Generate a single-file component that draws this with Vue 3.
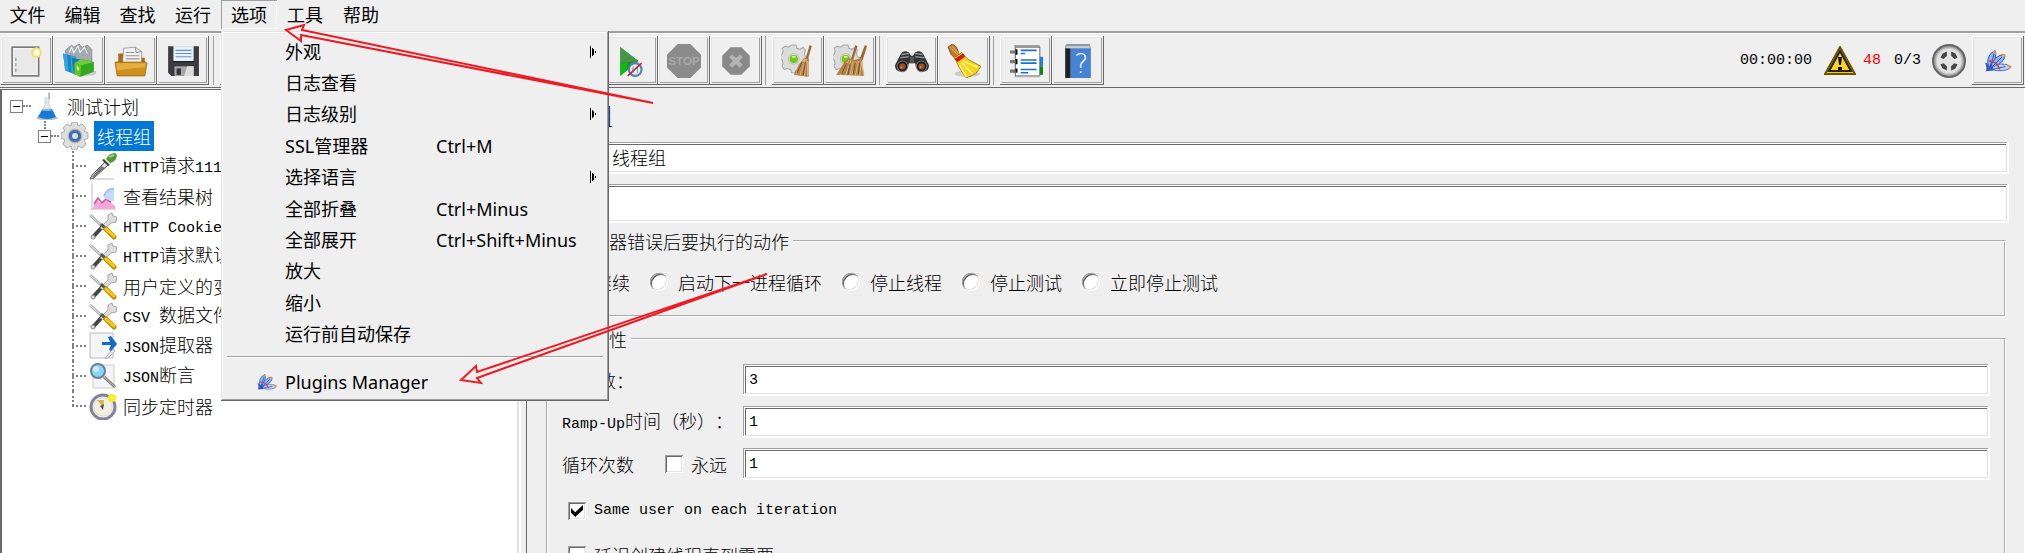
<template>
  <div class="window">
    <nav class="menubar">
      <button v-for="name in menus" :key="name" class="menu-title" :class="{ open: name === openMenu }" @click="openMenu = name">{{ name }}</button>
    </nav>

    <div class="toolbar">
      <div v-for="(group, index) in toolGroups" :key="index" class="tool-group">
        <button v-for="tool in group" :key="tool" class="tool" :aria-label="tool">
          <svg class="tool-icon" viewBox="0 0 32 32" v-html="icons[tool]"></svg>
        </button>
      </div>
      <div class="status">
        <span class="latin">00:00:00</span>
        <svg class="warning" viewBox="0 0 32 30">
          <path d="M16 1 31 28H1z" fill="#fc0" stroke="#6b5500" stroke-width="2" />
          <path d="M16 5 27 25H5z" fill="#ffd21a" stroke="#222" stroke-width="2" />
          <path d="M14 11h4l-1 8h-2zM14 21h4v3h-4z" fill="#111" />
        </svg>
        <span class="latin errors">48</span>
        <span class="latin threads">0/3</span>
        <svg class="tool-icon" viewBox="0 0 32 32" v-html="icons.state"></svg>
      </div>
      <button class="tool" aria-label="plugins">
        <svg class="tool-icon small" viewBox="0 0 32 32" v-html="icons.plugins"></svg>
      </button>
    </div>

    <div class="body">
      <ul class="tree">
        <li v-for="(node, index) in nodes" :key="index" class="node" :class="['level-' + node.level, { selected: node.selected }]">
          <button v-if="node.level < 2" class="expander" aria-label="collapse"></button>
          <svg class="node-icon" viewBox="0 0 28 28" v-html="icons[node.icon]"></svg>
          <span class="node-label"><span v-for="(run, i) in runs(node.text)" :key="i" :class="{ latin: run.latin }">{{ run.text }}</span></span>
        </li>
      </ul>

      <main class="panel">
        <h1 class="title">线程组</h1>
        <div class="row">
          <label for="name">名称：</label>
          <input id="name" v-model="name" class="field" type="text">
        </div>
        <div class="row">
          <label for="comment">注释：</label>
          <input id="comment" v-model="comment" class="field tall" type="text">
        </div>

        <fieldset class="box">
          <legend>在取样器错误后要执行的动作</legend>
          <div class="radios">
            <label v-for="action in actions" :key="action" class="choice">
              <input v-model="onError" class="radio" type="radio" name="action" :value="action">{{ action }}
            </label>
          </div>
        </fieldset>

        <fieldset class="box props">
          <legend>线程属性</legend>
          <div class="grid">
            <label for="threads">线程数：</label>
            <input id="threads" v-model="threads" class="field latin" type="text">
            <label for="ramp"><span class="latin">Ramp-Up</span>时间（秒）：</label>
            <input id="ramp" v-model="ramp" class="field latin" type="text">
            <div class="loops">
              <label for="loops">循环次数</label>
              <label class="choice"><input v-model="forever" class="check" type="checkbox">永远</label>
            </div>
            <input id="loops" v-model="loops" class="field latin" type="text">
          </div>
          <div class="options">
            <label class="choice"><input v-model="sameUser" class="check" type="checkbox"><span class="latin">Same user on each iteration</span></label>
            <label class="choice"><input v-model="delayed" class="check" type="checkbox">延迟创建线程直到需要</label>
          </div>
        </fieldset>
      </main>
    </div>

    <div v-if="openMenu === '选项'" class="popup">
      <ul class="popup-list">
        <li v-for="item in options" :key="item.text">
          <button class="item">
            <span class="item-text">{{ item.text }}</span>
            <span class="shortcut">{{ item.keys }}</span>
            <svg v-if="item.sub" class="sub" viewBox="0 0 6 12"><path d="M0 0h1v12H0zM2 2h1v8H2zM3 3h1v6H3zM5 5h1v2H5z" /></svg>
          </button>
        </li>
      </ul>
      <hr class="line">
      <button class="item plugins">
        <svg class="item-icon" viewBox="0 0 32 32" v-html="icons.plugins"></svg>
        <span class="item-text">Plugins Manager</span>
      </button>
    </div>

    <svg class="arrows" width="800" height="400" aria-hidden="true">
      <path d="M653 103 302 30 304 25 286 30 301 41V35z" />
      <path d="M767 274 477 372 476 366 461 380 481 383 477 378z" />
    </svg>
  </div>
</template>

<script setup>
import { ref } from 'vue';

const openMenu = ref('选项');
const name = ref('线程组');
const comment = ref('');
const onError = ref('');
const threads = ref('3');
const ramp = ref('1');
const loops = ref('1');
const forever = ref(false);
const sameUser = ref(true);
const delayed = ref(false);

const menus = ['文件', '编辑', '查找', '运行', '选项', '工具', '帮助'];
const actions = ['继续', '启动下一进程循环', '停止线程', '停止测试', '立即停止测试'];

const toolGroups = [
  ['new', 'templates', 'open', 'save'],
  ['cut', 'copy', 'paste'],
  ['expand', 'collapse', 'toggle'],
  ['start', 'startNoPause', 'stop', 'shutdown'],
  ['clear', 'clearAll'],
  ['search', 'searchReset'],
  ['functions', 'help']
];

const options = [
  { text: '外观', sub: true },
  { text: '日志查看' },
  { text: '日志级别', sub: true },
  { text: 'SSL管理器', keys: 'Ctrl+M' },
  { text: '选择语言', sub: true },
  { text: '全部折叠', keys: 'Ctrl+Minus' },
  { text: '全部展开', keys: 'Ctrl+Shift+Minus' },
  { text: '放大' },
  { text: '缩小' },
  { text: '运行前自动保存' }
];

const nodes = [
  { text: '测试计划', level: 0, icon: 'flask' },
  { text: '线程组', level: 1, icon: 'gear', selected: true },
  { text: 'HTTP请求111', level: 2, icon: 'dropper' },
  { text: '查看结果树', level: 2, icon: 'chart' },
  { text: 'HTTP Cookie管理器', level: 2, icon: 'config' },
  { text: 'HTTP请求默认值', level: 2, icon: 'config' },
  { text: '用户定义的变量', level: 2, icon: 'config' },
  { text: 'CSV 数据文件设置', level: 2, icon: 'config' },
  { text: 'JSON提取器', level: 2, icon: 'extract' },
  { text: 'JSON断言', level: 2, icon: 'lens' },
  { text: '同步定时器', level: 2, icon: 'clock' }
];

// Separa el texto en tramos latinos y chinos, cada uno con su fuente
function runs(text) {
  return text.match(/[\x20-\x7e]+|[^\x20-\x7e]+/g).map(part => ({ text: part, latin: part.charCodeAt(0) < 127 }));
}

const cog = '<path d="M10 1h4l1 3 3 1 3-2 2 3-1 3 1 3 3 1v3l-3 1-1 3 1 3-3 2-3-1-3 1-1 2h-3l-1-3-3-1-3 1-2-3 1-3-1-3-2-1v-3l2-1 1-3-1-3 3-2 3 1z" fill="#dcdcdc" stroke="#aaa"/><circle cx="12" cy="14" r="5" fill="#eee" stroke="#bbb"/><circle cx="12" cy="14" r="4" fill="#76c51b"/><ellipse cx="12" cy="12" rx="2" ry="1" fill="#d5f7a0"/>';

const icons = {
  new: '<rect x="2" y="3" width="25" height="27" fill="#f4f4f4" stroke="#777" stroke-width="1.5"/><rect x="4" y="5" width="21" height="23" fill="#e9e9ea"/><path d="M5 13h1v3H5zM5 18h1v3H5zM5 23h1v3H5z" fill="#888"/><circle cx="25" cy="8" r="5" fill="#f3e06c"/><circle cx="25" cy="8" r="3" fill="#fffce0"/>',
  templates: '<ellipse cx="22" cy="27" rx="11" ry="3" fill="#ccc"/><path d="M3 6 9 1l2 2 5-3 3 3 5-2 4 4v12H5z" fill="#a3abad" stroke="#778" stroke-width=".6"/><path d="m7 8 2-5 2 5 4-6 2 6 4-5 3 6" fill="none" stroke="#f4f6f6"/><path d="m1 9 12 3v17L3 25z" fill="#1386c4"/><path d="m1 9 4 1 1 16-3-1zM8 11l5 1v17l-4-2z" fill="#36a3de"/><path d="m9 13 11 2v14l-9-2z" fill="#117aba"/><path d="m11 18 7-4 12 3v9l-13 5-5-3z" fill="#36a81d"/><path d="m12 18 6 2-1 11-5-3z" fill="#68c822"/><path d="m18 20 12-3-12-3-6 4z" fill="#71ca39"/><path d="m14 21 2 1v3l-2-1z" fill="#e7ffd3"/>',
  open: '<path d="M4 9h8l2 4h15v9H4z" fill="#a76b11"/><path d="m9 4 11-1 6 4v12H8z" fill="#f1f1f1" stroke="#888" stroke-width=".7"/><path d="m20 3 1 5 5-1M11 8h8m-8 3h13m-13 3h13" fill="none" stroke="#999"/><path d="M1 17h29l1 1-2 12H3z" fill="#d18f20" stroke="#956006" stroke-width=".7"/><path d="M2 18h28l-1 4q-13 0-26 3z" fill="#e4ae40"/>',
  save: '<path d="M2 2h29v28H5l-3-3z" fill="#3c3c40"/><path d="M7 2h19v14H7z" fill="#e9f1fb"/><path d="M9 6h15M9 9h15M9 12h15" stroke="#6596cb"/><path d="M6 16h21v1H6z" fill="#1b1b1d"/><rect x="8" y="21" width="18" height="9" fill="#a6a7aa"/><path d="M10 23h4v6h-4z" fill="#303134"/><path d="M20 21h6v9h-9z" fill="#ddd"/>',
  cut: '<path d="m10 4 12 20M22 4 10 24" stroke="#666" stroke-width="2"/>',
  copy: '<path d="M6 4h14v18H6zM12 10h14v18H12z" fill="#fff" stroke="#777"/>',
  paste: '<path d="M6 4h20v24H6z" fill="#c99f5c" stroke="#777"/>',
  expand: '<path d="M14 6h4v8h8v4h-8v8h-4v-8H6v-4h8z" fill="#555"/>',
  collapse: '<path d="M6 14h20v4H6z" fill="#555"/>',
  toggle: '<path d="m4 16 8-8v5h8V8l8 8-8 8v-5h-8v5z" fill="#555"/>',
  start: '<path d="M7 3 27 16 7 29z" fill="#159a20"/>',
  startNoPause: '<path d="M5 3 22 16 5 30z" fill="#19911d"/><path d="m5 3 17 13-17 2z" fill="#46964a"/><path d="M5 18h7l-2 8-5 3z" fill="#0abf0a"/><circle cx="19" cy="24" r="6" fill="#e9f2fa" stroke="#4f82b0" stroke-width="2"/><path d="M17 21v6m4-6v6" stroke="#649bca"/><path d="m12 30 13-12" stroke="#d52222" stroke-width="1.5"/>',
  stop: '<path d="M10 0h12l10 10v12L22 32H10L0 22V10z" fill="#8b8b8b"/><text x="16" y="20" text-anchor="middle" font-family="Liberation Sans" font-weight="bold" font-size="11" fill="#a9a9a9">STOP</text>',
  shutdown: '<path d="M11 3h10l8 8v10l-8 8H11l-8-8V11z" fill="#898989"/><path d="m11 11 10 10M21 11 11 21" stroke="#b4b4b4" stroke-width="4"/>',
  clear: cog + '<path d="m27 1 2 1-4 13-2-1z" fill="#9a6a34"/><path d="m22 13 4 1v17l-14-2 5-10z" fill="#b68145"/><path d="m22 14-8 14m9-14-5 15m6-15-2 16m3-14v14" stroke="#d9b37d"/><path d="m20 17-5 10m8-10-2 12" stroke="#7c4e22"/>',
  clearAll: cog + '<path d="m21 1 2 1-4 13-2-1zM30 1l2 1-4 13-3-1z" fill="#9a6a34"/><path d="m15 13 5 2 7-2 2 17-26-1 7-11z" fill="#b68145"/><path d="M15 15 7 29m10-14-5 14m7-13-3 13m6-12-5 13m7-14-3 14m6-14-2 14m2-13 2 12" stroke="#dbb681"/><path d="m13 18-5 10m8-9-2 10m7-11-2 10m6-10-1 10" stroke="#7c4e22"/>',
  search: '<path d="M5 10q3-5 8-2l2 3h2l2-3q5-3 8 2l5 10q0 6-6 6-6 0-7-8h-6q-1 8-7 8-6 0-6-6z" fill="#303135"/><path d="m6 10 7-1M19 9l7 1M5 13l8-1M19 12l9 1" stroke="#8a8c90" stroke-width="1.5"/><path d="M14 12h4v6h-4z" fill="#555"/><circle cx="7" cy="21" r="5" fill="#151515" stroke="#777"/><circle cx="25" cy="21" r="5" fill="#151515" stroke="#777"/><circle cx="7" cy="21" r="3" fill="#97501a"/><circle cx="25" cy="21" r="3" fill="#97501a"/><circle cx="6" cy="22" r="1" fill="#d98e45"/><circle cx="24" cy="22" r="1" fill="#d98e45"/>',
  searchReset: '<ellipse cx="19" cy="28" rx="12" ry="3" fill="#ccc"/><path d="m1 3 4-3 4 3 3 8-5 2-3-3z" fill="#bd792a" stroke="#774714" stroke-width=".8"/><path d="m3 3 7 7M5 2l6 7" stroke="#e0a455"/><path d="m7 13 7-5 5 6 13 7-5 7-9 4-6-9z" fill="#f2d51c" stroke="#9a7e05" stroke-width=".8"/><path d="m15 16 14 6m-15-4 10 10m-12-8 6 11" stroke="#fff17b" stroke-width="1.5"/><path d="m7 14 8-5 2 3-7 5z" fill="#d31621"/>',
  functions: '<rect x="5" y="3" width="24" height="29" fill="#ddd"/><rect x="6" y="3" width="23" height="27" fill="#fff" stroke="#777"/><rect x="5" y="1" width="24" height="2" fill="#999"/><path d="M6 5h2v5H6zM6 14h2v5H6zM6 23h2v4H6z" fill="#111"/><path d="M1 6h5v3H1zM1 15h5v3H1zM1 24h5v3H1z" fill="#777"/><path d="M11 6h15M11 9h4M11 15h15M11 18h15M11 24h15M11 27h7" stroke="#1672d4" stroke-width="1.5"/><path d="M29 12h3v9h-3z" fill="#1d7de5"/><path d="M29 21h3v8h-3z" fill="#078912"/>',
  help: '<path d="M4 2q0-2 2-2h21l1 4v27H4z" fill="#8a98aa"/><path d="M4 4h5v28H4z" fill="#222"/><path d="M9 4h19v28H9z" fill="#4683d4"/><path d="M5 2h22v2H5z" fill="#ccc"/><text x="19" y="27" text-anchor="middle" font-family="DejaVu Sans" font-size="25" fill="#f1f7ff">?</text>',
  state: '<circle cx="16" cy="16" r="15" fill="#aaa" stroke="#666" stroke-width="2"/><circle cx="16" cy="16" r="12" fill="#e3e3e3" stroke="#ccc"/><path d="m8 13 2-4 4-2v4l-3 3zM18 7l4 2 2 4-3 1-3-3zM8 19l3-1 3 3v4l-4-2zM21 18l3 1-2 4-4 2v-4z" fill="#444"/>',
  plugins: '<path d="M6 25Q2 9 13 5q3 6-6 20" fill="#8cb5ec" stroke="#3155b5"/><path d="M7 25Q12 9 23 9q2 8-16 16" fill="#8fb6eb" stroke="#3155b5"/><path d="M7 25q12-10 23-3-5 7-23 3" fill="#c1d4f3" stroke="#4267bd"/><path d="M7 24 12 8M8 24l12-12M9 25l15-3M5 26l-2-8 4 6 2-5 1 6" fill="none" stroke="#244bbb"/><path d="M11 7q3-2 2 2M20 10q4-2 3 2M26 21q4 0 2 3" fill="none" stroke="#e59a48" stroke-width="2"/><path d="M6 16q9 0 12 9" fill="none" stroke="#d13b54" stroke-width="1.5"/><path d="m5 19 6 7-8 1z" fill="#315bc0"/>',
  flask: '<ellipse cx="14" cy="26" rx="11" ry="2" fill="#bbb"/><path d="M12 6h4v7l6 12q-8 3-17 0l7-12z" fill="#e3eaee" stroke="#b9c4c9" stroke-width=".7"/><path d="m15 1 2-1v7h-2z" fill="#bbb"/><path d="m9 18 10-1 4 8q-9 4-18 0z" fill="#1679da"/><ellipse cx="14" cy="18" rx="5" ry="1" fill="#76b5ed"/>',
  gear: '<path d="M11 0h5l1 4 4-2 4 4-2 3 4 2v5l-4 2 2 4-4 4-4-2-1 4h-5l-1-4-4 2-4-4 2-4-4-2v-5l4-2-2-3 4-4 4 2z" fill="#dedfe0" stroke="#999" stroke-width=".8"/><circle cx="14" cy="14" r="7" fill="#8f9da9" stroke="#bbb"/><circle cx="14" cy="14" r="6" fill="#476da6"/><circle cx="14" cy="14" r="3" fill="#c8e3fb"/>',
  dropper: '<path d="M3 27h22" stroke="#ddd" stroke-width="2"/><path d="m16 10 3 3L5 26l-4 1 2-4z" fill="#dfe2e1" stroke="#555"/><path d="m12 14 4 2L5 26l-2-1z" fill="#777"/><path d="m15 7 6 6-2 1-6-6z" fill="#444"/><path d="M17 7q3-6 9-6 3 1 1 6-2 3-6 4z" fill="#4e9836"/><path d="m20 5 5-2" stroke="#9fce85" stroke-width="2"/>',
  chart: '<path d="M3 1v27h24" fill="none" stroke="#bbb"/><path d="M4 26q3-10 5-8l3 3q4-5 8-2l6 5v3H4z" fill="#f5a6dc"/><path d="m5 22 4-6 4 5 4-4 5 3" fill="none" stroke="#d0518a" stroke-width="1.5"/><path d="M14 14q3-9 11-8v13q-8 0-11-5z" fill="#c1dafb"/><path d="M15 14q3-8 10-7" fill="none" stroke="#82aae9"/>',
  config: '<path d="m1 3 12 11" stroke="#aaa" stroke-width="3"/><path d="m1 3 12 11" stroke="#eee"/><path d="M14 14 4 25" stroke="#454545" stroke-width="4"/><circle cx="4" cy="25" r="2" fill="#ddd" stroke="#888"/><path d="m11 16 8-8V3l4-2 1 3 4 1-1 5-5 1-8 7z" fill="#ddd" stroke="#888" stroke-width=".7"/><path d="m12 12 5 5" stroke="#555" stroke-width="3"/><path d="m17 17 8 8" stroke="#b98d09" stroke-width="5" stroke-linecap="round"/><path d="m17 17 8 7" stroke="#f6c812" stroke-width="3" stroke-linecap="round"/>',
  extract: '<path d="M1 1h23v25H1z" fill="#f5f5f6" stroke="#bbb"/><path d="m16 26 8-9 2 2-7 7z" fill="#eee" stroke="#aaa"/><path d="M13 10h8l-2-5 3-1 6 8-6 7-2-1 2-5h-9z" fill="#116bcc"/>',
  lens: '<path d="M4 3h21v23H4z" fill="#f4f4f4" stroke="#ccc"/><path d="m15 15 11 10" stroke="#777" stroke-width="3"/><path d="m15 15 11 10" stroke="#ccc"/><circle cx="9" cy="9" r="7" fill="#8fd4f4" stroke="#65829a" stroke-width="2"/><circle cx="7" cy="7" r="3" fill="#c4ecfb"/>',
  clock: '<circle cx="14" cy="15" r="12" fill="#f1f0ec" stroke="#85829b" stroke-width="3"/><circle cx="14" cy="15" r="9" fill="#f3f0df" stroke="#ddd"/><path d="M14 15 8 8h7z" fill="#d5b547"/><path d="m11 14 4-2-1 6z" fill="#555"/><circle cx="23" cy="6" r="4" fill="#f9ed16"/><circle cx="23" cy="6" r="1" fill="#fff"/>'
};
</script>

<style>
body {
  margin: 0;
  background: #efefef;
}
</style>

<style scoped>
.window {
  position: relative;
  display: flex;
  flex-direction: column;
  height: 100vh;
  overflow: hidden;
  box-sizing: border-box;
  background: #efefef;
  color: #000;
  font-family: "Noto Sans CJK SC", sans-serif;
  font-size: 18px;
  font-weight: 300;
  line-height: 24px;
  text-spacing-trim: space-all;
}

button,
input {
  margin: 0;
  padding: 0;
  border: none;
  background: none;
  color: inherit;
  font: inherit;
}

ul {
  margin: 0;
  padding: 0;
  list-style: none;
}

/* Texto latino de ancho fijo */
.latin {
  font-family: "Liberation Mono", monospace;
  font-size: 15px;
  font-weight: 400;
}

.menubar {
  display: flex;
  flex: none;
  height: 31px;
  border-bottom: 2px solid #a0a0a0;
}

.menu-title {
  width: 55px;
  height: 29px;
  padding-bottom: 1px;
  box-sizing: border-box;
  font-weight: 400;
}

.menu-title:nth-child(n+4) {
  width: 56px;
}

.menu-title.open {
  box-shadow: inset 1px 1px #a0a0a0, inset -1px -1px #fff;
}

.toolbar {
  display: flex;
  flex: none;
  align-items: center;
  height: 55px;
  padding: 0 1px;
  box-sizing: border-box;
  border-top: 1px solid #fff;
  border-bottom: 1px solid #696969;
}

.tool-group {
  display: flex;
}

.tool-group + .tool-group {
  padding-left: 6px;
  margin-left: 4px;
  border-left: 1px solid #a0a0a0;
}

.tool-group:nth-child(n+5) {
  margin-left: 3px;
}

.tool {
  display: flex;
  align-items: center;
  justify-content: center;
  width: 52px;
  height: 49px;
  box-shadow: inset -1px -1px #696969, inset 1px 1px #fff, inset -2px -2px #efefef, inset 2px 2px #e3e3e3, inset -3px -3px #a0a0a0;
}

.tool-icon {
  width: 34px;
  height: 34px;
}

.tool-icon.small {
  width: 30px;
  height: 30px;
}

.status {
  display: flex;
  align-items: center;
  margin-left: auto;
  margin-right: 6px;
}

.warning {
  width: 32px;
  height: 30px;
  margin: 0 7px 0 12px;
}

.errors {
  color: #f00;
}

.threads {
  margin: 0 11px 0 13px;
}

.body {
  display: flex;
  flex: 1;
  min-height: 0;
}

.tree {
  flex: none;
  width: 517px;
  box-sizing: border-box;
  margin-top: 1px;
  margin-right: 9px;
  padding: 1px 0 0 1px;
  overflow: hidden;
  background: #fff;
  border-top: 1px solid #696969;
  border-left: 2px solid #696969;
  box-shadow: 2px 0 #e3e3e3, 4px 0 #fff;
}

.node {
  position: relative;
  display: flex;
  align-items: center;
  height: 30px;
  white-space: nowrap;
}

.level-0 {
  padding-left: 7px;
}

.level-1 {
  padding-left: 35px;
}

.level-2 {
  padding-left: 86px;
}

.expander {
  width: 13px;
  height: 13px;
  box-sizing: border-box;
  border: 1px solid #808080;
  background: linear-gradient(#000, #000) center / 7px 1px no-repeat;
}

.node-icon {
  flex: none;
  width: 28px;
  height: 28px;
}

.level-0 .node-icon {
  margin-left: 10px;
}

.level-1 .node-icon {
  margin-left: 10px;
}

.node-label {
  padding: 3px 4px 3px 6px;
}

.level-1 .node-label {
  margin-left: 5px;
  padding: 3px;
}

.selected .node-label {
  background: #0078d7;
  color: #fff;
}

/* Guías punteadas del árbol */
.level-2::before,
.level-2::after {
  content: "";
  position: absolute;
  left: 69px;
  top: 0;
  height: 30px;
  border-left: 2px dotted #808080;
}

.level-2::after {
  top: 14px;
  width: 14px;
  height: 0;
  border-left: none;
  border-top: 2px dotted #808080;
}

.level-2:last-child::before {
  height: 15px;
}

.level-0::after,
.level-1::after {
  content: "";
  position: absolute;
  top: 14px;
  left: 20px;
  width: 8px;
  border-top: 2px dotted #808080;
}

.level-1::after {
  left: 48px;
}

.level-1::before {
  content: "";
  position: absolute;
  top: 0;
  left: 41px;
  height: 8px;
  border-left: 2px dotted #808080;
}

.panel {
  flex: 1;
  min-width: 0;
  padding: 0 15px 0 14px;
  border-left: 1px solid #696969;
  border-right: 1px solid #fff;
}

.title {
  margin: 0;
  font-size: 24px;
  font-weight: 300;
  line-height: 54px;
}

.row {
  display: flex;
  align-items: center;
  margin-bottom: 10px;
}

.row label {
  flex: none;
  width: 63px;
}

.row .field {
  flex: 1;
  padding: 0 6px 2px 8px;
}

.field {
  min-width: 0;
  height: 32px;
  padding: 0 6px;
  box-sizing: border-box;
  background: #fff;
  box-shadow: inset -2px -2px #fff, inset 1px 1px #a0a0a0, inset 2px 2px #fff, inset -3px -3px #e3e3e3, inset 3px 3px #696969;
  outline: none;
}

.field.tall {
  height: 39px;
}

.box {
  min-width: 0;
  margin: 0 3px 10px 5px;
  padding: 16px 3px 20px;
  border: 2px groove #fff;
}

.row + .box {
  margin-top: -4px;
}

.box legend {
  padding: 0 4px;
}

.radios {
  display: flex;
  gap: 20px;
  height: 26px;
  padding-left: 15px;
}

.choice {
  display: flex;
  align-items: center;
  gap: 10px;
}

.radio,
.check {
  appearance: none;
  flex: none;
  width: 18px;
  height: 18px;
  background: #fff;
  box-shadow: inset 1px 1px #a0a0a0, inset -1px -1px #fff, inset 2px 2px #696969, inset -2px -2px #e3e3e3;
}

.radio {
  border-radius: 50%;
}

.check:checked::before {
  content: "";
  display: block;
  width: 12px;
  height: 12px;
  margin: 3px;
  background: #000;
  clip-path: polygon(0 25%, 35% 60%, 100% 0, 100% 40%, 35% 100%, 0 65%);
}

.props {
  padding: 13px 14px 20px 3px;
}

.grid {
  display: grid;
  grid-template-columns: 181px 1fr;
  row-gap: 10px;
  align-items: center;
  margin-left: 11px;
  white-space: nowrap;
}

.loops {
  display: flex;
  gap: 31px;
}

.options {
  display: grid;
  gap: 20px;
  margin: 19px 0 0 17px;
}

.loops .choice,
.options .choice {
  gap: 8px;
}

.popup {
  position: absolute;
  top: 31px;
  left: 221px;
  width: 388px;
  height: 370px;
  box-sizing: border-box;
  padding: 5px 6px 0;
  background: #efefef;
  box-shadow: inset -1px -1px #696969, inset 1px 1px #e3e3e3, inset -2px -2px #a0a0a0, inset 2px 2px #fff;
  font-family: "Noto Sans", "Noto Sans CJK SC", sans-serif;
  font-weight: 400;
}

.popup-list {
  display: grid;
  grid-auto-rows: 1fr;
  height: 314px;
}

.item {
  display: flex;
  align-items: center;
  width: 100%;
  height: 100%;
  padding: 0 7px 0 58px;
  text-align: left;
}

.popup-list .item-text {
  width: 151px;
}

.sub {
  width: 6px;
  height: 12px;
  margin-left: auto;
}

.line {
  margin: 6px 0;
  border: none;
  border-top: 1px solid #a0a0a0;
  border-bottom: 1px solid #fff;
}

.item.plugins {
  height: 36px;
  padding-left: 29px;
}

.item-icon {
  width: 22px;
  height: 22px;
  margin-right: 7px;
}

/* Flechas rojas que señalan el menú y el gestor de plugins */
.arrows {
  position: absolute;
  top: 0;
  left: 0;
  fill: none;
  stroke: #ed1c24;
  stroke-width: 2;
  pointer-events: none;
}
</style>
